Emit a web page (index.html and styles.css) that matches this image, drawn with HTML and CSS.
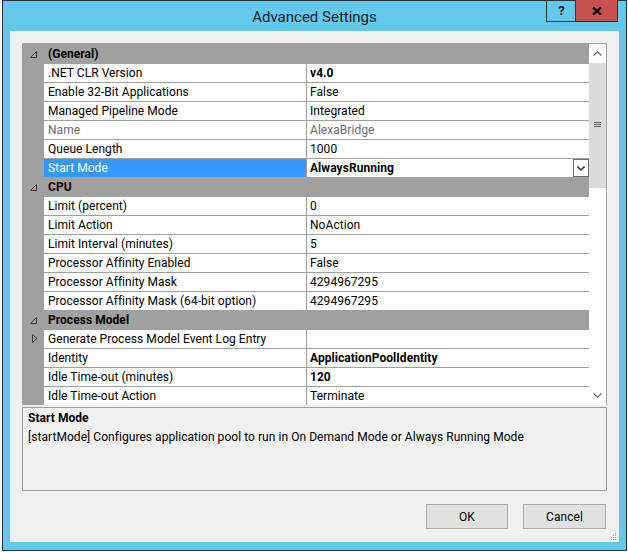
FILE: index.html
```html
<!DOCTYPE html>
<html>
<head>
<meta charset="utf-8">
<link rel="stylesheet" href="styles.css">
</head>
<body>
<div class="window">
  <div class="titlebar">
    <span class="title">Advanced Settings</span>
    <div class="caption-buttons">
      <div class="cbtn help">?</div>
      <div class="cbtn close"><svg width="10" height="8" viewBox="0 0 10 8"><path d="M1 0.5 L9 7.5 M9 0.5 L1 7.5" stroke="#000" stroke-width="2.2" fill="none"/></svg></div>
    </div>
  </div>
  <div class="client">
    <div class="grid">
      <div class="rows">
        <div class="row cat"><span class="gutter"><svg class="collapse" width="7" height="7" viewBox="0 0 7 7"><path d="M6.5 0.5 L6.5 6.5 L0.5 6.5 Z" stroke="#3c3c3c" stroke-width="1" fill="none"/></svg></span><span class="cat-name">(General)</span></div>
        <div class="row"><span class="gutter"></span><span class="name">.NET CLR Version</span><span class="value bold">v4.0</span></div>
        <div class="row"><span class="gutter"></span><span class="name">Enable 32-Bit Applications</span><span class="value">False</span></div>
        <div class="row"><span class="gutter"></span><span class="name">Managed Pipeline Mode</span><span class="value">Integrated</span></div>
        <div class="row disabled"><span class="gutter"></span><span class="name">Name</span><span class="value">AlexaBridge</span></div>
        <div class="row"><span class="gutter"></span><span class="name">Queue Length</span><span class="value">1000</span></div>
        <div class="row selected"><span class="gutter"></span><span class="name">Start Mode</span><span class="value bold">AlwaysRunning<span class="dropbtn"><svg width="8" height="5" viewBox="0 0 8 5"><path d="M0.5 0.5 L4 4 L7.5 0.5" stroke="#404040" stroke-width="1.6" fill="none"/></svg></span></span></div>
        <div class="row cat"><span class="gutter"><svg class="collapse" width="7" height="7" viewBox="0 0 7 7"><path d="M6.5 0.5 L6.5 6.5 L0.5 6.5 Z" stroke="#3c3c3c" stroke-width="1" fill="none"/></svg></span><span class="cat-name">CPU</span></div>
        <div class="row"><span class="gutter"></span><span class="name">Limit (percent)</span><span class="value">0</span></div>
        <div class="row"><span class="gutter"></span><span class="name">Limit Action</span><span class="value">NoAction</span></div>
        <div class="row"><span class="gutter"></span><span class="name">Limit Interval (minutes)</span><span class="value">5</span></div>
        <div class="row"><span class="gutter"></span><span class="name">Processor Affinity Enabled</span><span class="value">False</span></div>
        <div class="row"><span class="gutter"></span><span class="name">Processor Affinity Mask</span><span class="value">4294967295</span></div>
        <div class="row"><span class="gutter"></span><span class="name">Processor Affinity Mask (64-bit option)</span><span class="value">4294967295</span></div>
        <div class="row cat"><span class="gutter"><svg class="collapse" width="7" height="7" viewBox="0 0 7 7"><path d="M6.5 0.5 L6.5 6.5 L0.5 6.5 Z" stroke="#3c3c3c" stroke-width="1" fill="none"/></svg></span><span class="cat-name">Process Model</span></div>
        <div class="row"><span class="gutter"><svg class="expand" width="6" height="9" viewBox="0 0 6 9"><path d="M0.5 0.5 L5 4.5 L0.5 8.5 Z" stroke="#3c3c3c" stroke-width="1" fill="none"/></svg></span><span class="name">Generate Process Model Event Log Entry</span><span class="value"></span></div>
        <div class="row"><span class="gutter"></span><span class="name">Identity</span><span class="value bold">ApplicationPoolIdentity</span></div>
        <div class="row"><span class="gutter"></span><span class="name">Idle Time-out (minutes)</span><span class="value bold">120</span></div>
        <div class="row"><span class="gutter"></span><span class="name">Idle Time-out Action</span><span class="value">Terminate</span></div>
      </div>
      <div class="scrollbar">
        <div class="sb-btn"><svg width="9" height="5" viewBox="0 0 9 5"><path d="M0.5 4.5 L4.5 0.8 L8.5 4.5" stroke="#606060" stroke-width="1.1" fill="none"/></svg></div>
        <div class="sb-thumb"><svg width="7" height="6" viewBox="0 0 7 6"><path d="M0 0.5 H7 M0 2.5 H7 M0 4.5 H7" stroke="#606060" stroke-width="1"/></svg></div>
        <div class="sb-track"></div>
        <div class="sb-btn"><svg width="9" height="5" viewBox="0 0 9 5"><path d="M0.5 0.5 L4.5 4.2 L8.5 0.5" stroke="#606060" stroke-width="1.1" fill="none"/></svg></div>
      </div>
    </div>
    <div class="desc">
      <div class="desc-title">Start Mode</div>
      <div class="desc-text">[startMode] Configures application pool to run in On Demand Mode or Always Running Mode</div>
    </div>
    <div class="buttons">
      <div class="btn ok">OK</div>
      <div class="btn cancel">Cancel</div>
    </div>
    <svg class="grip" width="7" height="7" viewBox="0 0 7 7"><g fill="#a8a8a8"><rect x="5" y="0" width="1" height="1"/><rect x="3" y="2" width="1" height="1"/><rect x="5" y="2" width="1" height="1"/><rect x="1" y="4" width="1" height="1"/><rect x="3" y="4" width="1" height="1"/><rect x="5" y="4" width="1" height="1"/><rect x="1" y="6" width="1" height="1"/><rect x="3" y="6" width="1" height="1"/><rect x="5" y="6" width="1" height="1"/></g></svg>
  </div>
</div>
</body>
</html>
```

FILE: styles.css
```css
html, body {
  margin: 0;
  padding: 0;
  background: #ffffff;
}

body {
  font-family: Roboto, "Liberation Sans", sans-serif;
  font-size: 12px;
  color: #000;
  letter-spacing: 0.05px;
}

.window {
  margin-left: 2px;
  width: 625px;
  height: 551px;
  box-sizing: border-box;
  border: 1px solid #333333;
  background: #63c9eb;
  display: flex;
  flex-direction: column;
  position: relative;
}

.titlebar {
  height: 30px;
  flex: none;
  position: relative;
  display: flex;
  align-items: center;
  justify-content: center;
}

.title {
  font-size: 15px;
  color: #1a1a1a;
  margin-top: 1px;
  letter-spacing: 0;
}

.caption-buttons {
  position: absolute;
  top: -1px;
  right: 8px;
  display: flex;
}

.cbtn {
  height: 22px;
  box-sizing: border-box;
  border-bottom: 1px solid #333333;
  border-left: 1px solid #333333;
  display: flex;
  align-items: center;
  justify-content: center;
}

.help {
  width: 29px;
  font-weight: bold;
  font-size: 13px;
  color: #111;
  padding-left: 1px;
}

.close {
  width: 43px;
  background: #c75050;
  border-right: 1px solid #333333;
}

.client {
  flex: 1;
  margin: 0 7px 8px 7px;
  background: #f0f0f0;
  padding: 12px 12px 0 12px;
  position: relative;
}

.grid {
  display: flex;
  width: 585px;
  box-sizing: border-box;
  border-top: 1px solid #a0a0a0;
  border-right: 1px solid #a8a8a8;
  background: #a0a0a0;
}

.rows {
  width: 567px;
  flex: none;
}

.row {
  display: flex;
  height: 19px;
  box-sizing: border-box;
  border-top: 1px solid #a0a0a0;
  line-height: 18px;
}

.gutter {
  width: 22px;
  flex: none;
  background: #a0a0a0;
  position: relative;
}

.collapse {
  position: absolute;
  left: 8px;
  top: 6px;
}

.expand {
  position: absolute;
  left: 10px;
  top: 4px;
}

.name {
  width: 263px;
  flex: none;
  box-sizing: border-box;
  padding-left: 4px;
  background: #fff;
  border-right: 1px solid #a0a0a0;
  white-space: nowrap;
  overflow: hidden;
}

.value {
  flex: 1;
  padding-left: 3px;
  background: #fff;
  white-space: nowrap;
  position: relative;
  display: flex;
}

.bold {
  font-weight: bold;
}

.cat {
  background: #a0a0a0;
}

.cat-name {
  padding-left: 4px;
  font-weight: bold;
}

.disabled .name,
.disabled .value {
  color: #6d6d6d;
}

.selected .name {
  background: #3399ff;
  color: #fff;
}

.dropbtn {
  margin-left: auto;
  width: 16px;
  height: 18px;
  box-sizing: border-box;
  border: 1px solid #707070;
  background: #fff;
  display: flex;
  align-items: center;
  justify-content: center;
}

.scrollbar {
  flex: 1;
  display: flex;
  flex-direction: column;
  background: #fff;
}

.sb-btn {
  height: 19px;
  flex: none;
  display: flex;
  align-items: center;
  justify-content: center;
  background: #fff;
}

.sb-thumb {
  height: 124px;
  flex: none;
  background: #dadada;
  display: flex;
  align-items: center;
  justify-content: center;
}

.sb-track {
  flex: 1;
  background: #fff;
  border-top: 1px solid #d8d8d8;
}

.desc {
  margin-top: 2px;
  width: 585px;
  height: 84px;
  box-sizing: border-box;
  border: 1px solid #a0a0a0;
  padding-left: 5px;
  padding-top: 1px;
}

.desc-title {
  font-weight: bold;
  line-height: 18px;
}

.desc-text {
  line-height: 18px;
  margin-top: 1px;
}

.buttons {
  display: flex;
  justify-content: flex-end;
  gap: 15px;
  margin-top: 13px;
  margin-right: 1px;
}

.btn {
  height: 25px;
  box-sizing: border-box;
  border: 1px solid #adadad;
  background: #e1e1e1;
  display: flex;
  align-items: center;
  justify-content: center;
}

.ok {
  width: 82px;
}

.cancel {
  width: 83px;
}

.grip {
  position: absolute;
  right: 2px;
  bottom: 2px;
}
```
